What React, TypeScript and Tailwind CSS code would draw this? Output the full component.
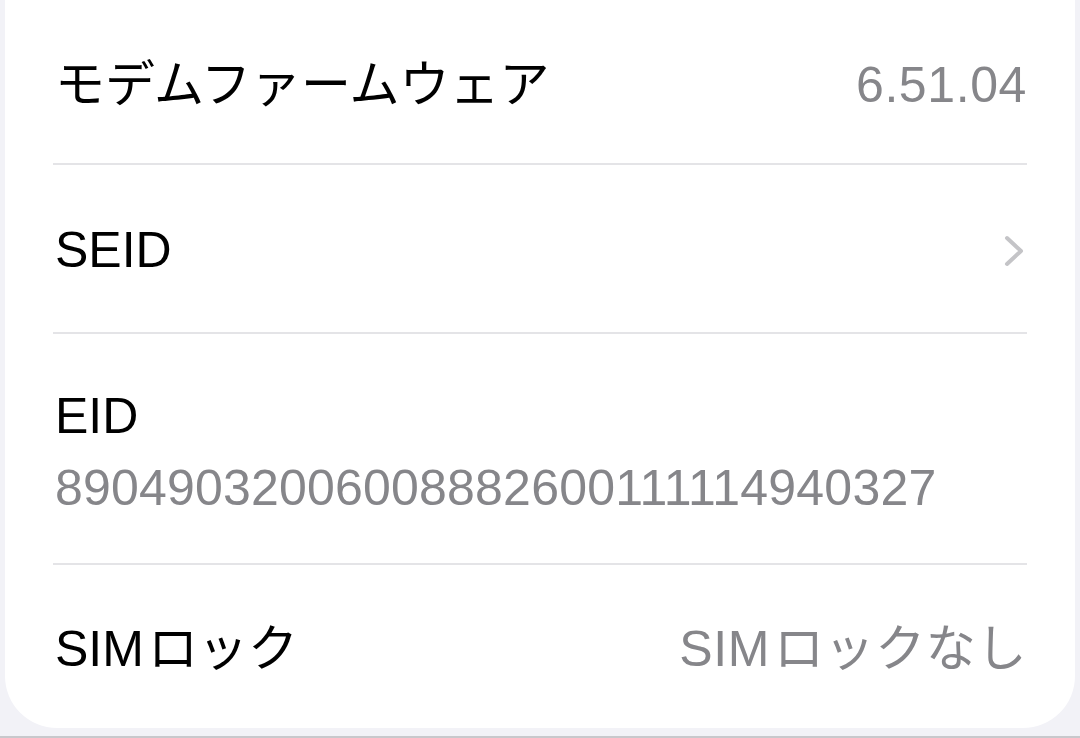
import React from 'react';

interface InfoRow {
    label: React.ReactNode;
    value?: React.ReactNode;
    chevron?: boolean;
    stacked?: boolean;
    rowClass: string;
}

// iOS puts a small gap between Latin and kana
const SimLock: React.FC<{ suffix?: string }> = ({ suffix = '' }) => (
    <>
        SIM<span className="ml-[4px]">ロック{suffix}</span>
    </>
);

const rows: InfoRow[] = [
    { label: 'モデムファームウェア', value: '6.51.04', rowClass: 'h-[163px] pt-[7px]' },
    { label: 'SEID', chevron: true, rowClass: 'h-[167px] pt-[3px]' },
    { label: 'EID', value: '89049032006008882600111114940327', stacked: true, rowClass: 'h-[229px] pt-[6px]' },
    { label: <SimLock />, value: <SimLock suffix="なし" />, rowClass: 'h-[163px] pt-[5px]' },
];

const Chevron: React.FC = () => (
    <svg width="22" height="32" viewBox="0 0 22 32" fill="none">
        <path d="M4 3 L18 16 L4 29" stroke="#c4c4c7" strokeWidth="4" strokeLinecap="round" strokeLinejoin="round" />
    </svg>
);

const App: React.FC = () => {
    return (
        <div className="w-[1080px] h-[738px] bg-[#f2f2f7] flex flex-col overflow-hidden font-['Liberation_Sans','Noto_Sans_CJK_JP',sans-serif] text-[50px] leading-[58px]">
            <div className="mx-[5px] bg-white rounded-b-[52px] px-[48px]">
                {rows.map((row, index) => (
                    <div key={index}>
                        {row.stacked ? (
                            <div className={`${row.rowClass} flex flex-col justify-center gap-[14px] pl-[2px]`}>
                                <span className="text-black">{row.label}</span>
                                <span className="text-[#86868a] tracking-[0.2px]">{row.value}</span>
                            </div>
                        ) : (
                            <div className={`${row.rowClass} flex items-center justify-between pl-[2px]`}>
                                <span className="text-black">{row.label}</span>
                                {row.chevron ? (
                                    <div className="pr-[2px] pt-[2px]">
                                        <Chevron />
                                    </div>
                                ) : (
                                    <span className="text-[#86868a] tracking-[0.6px]">{row.value}</span>
                                )}
                            </div>
                        )}
                        {index < rows.length - 1 && <div className="h-[2px] bg-[#e4e4e7]"></div>}
                    </div>
                ))}
            </div>
            <div className="flex-1"></div>
            <div className="h-[2px] bg-[#c8c8cc]"></div>
        </div>
    );
};

export default App;
